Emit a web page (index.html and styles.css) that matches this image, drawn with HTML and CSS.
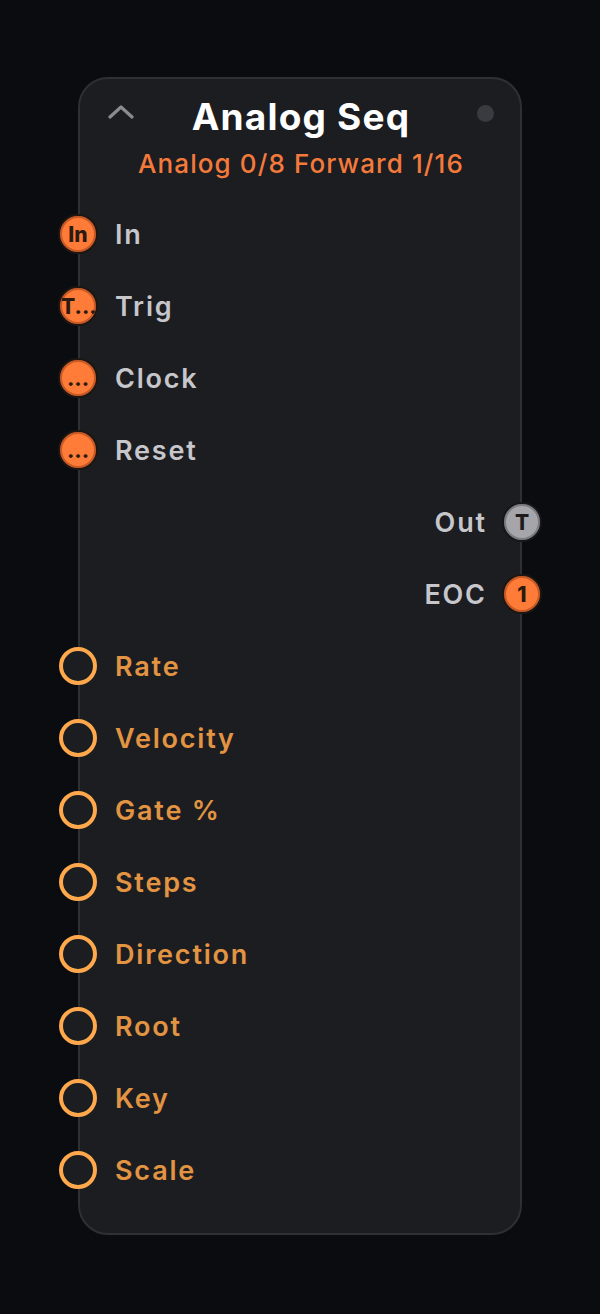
FILE: index.html
```html
<!DOCTYPE html>
<html lang="en">
<head>
  <meta charset="UTF-8" />
  <title>Analog Seq</title>
  <link rel="stylesheet" href="styles.css">
</head>
<body>
  <div class="node">
    <div class="node-header">
      <svg class="collapse" width="26" height="16" viewBox="0 0 26 16">
        <path d="M2 13 L13 3 L24 13" fill="none" stroke="#8a8b90" stroke-width="3.2" stroke-linecap="round" stroke-linejoin="round"/>
      </svg>
      <div class="title">Analog Seq</div>
      <span class="status-dot"></span>
      <div class="subtitle">Analog 0/8 Forward 1/16</div>
    </div>

    <div class="ports">
      <div class="port in"><span class="jack filled">In</span><span class="label">In</span></div>
      <div class="port in"><span class="jack filled overflow">T...</span><span class="label">Trig</span></div>
      <div class="port in"><span class="jack filled">...</span><span class="label">Clock</span></div>
      <div class="port in"><span class="jack filled">...</span><span class="label">Reset</span></div>
      <div class="port out"><span class="label">Out</span><span class="jack grey">T</span></div>
      <div class="port out"><span class="label">EOC</span><span class="jack filled">1</span></div>
      <div class="port in param"><span class="jack ring"></span><span class="label">Rate</span></div>
      <div class="port in param"><span class="jack ring"></span><span class="label">Velocity</span></div>
      <div class="port in param"><span class="jack ring"></span><span class="label">Gate %</span></div>
      <div class="port in param"><span class="jack ring"></span><span class="label">Steps</span></div>
      <div class="port in param"><span class="jack ring"></span><span class="label">Direction</span></div>
      <div class="port in param"><span class="jack ring"></span><span class="label">Root</span></div>
      <div class="port in param"><span class="jack ring"></span><span class="label">Key</span></div>
      <div class="port in param"><span class="jack ring"></span><span class="label">Scale</span></div>
    </div>
  </div>
</body>
</html>
```

FILE: styles.css
```css
* { box-sizing: border-box; }

body {
  margin: 0;
  padding: 77px 0 0;
  background: #0b0c0f;
  font-family: Inter, 'Noto Sans', sans-serif;
  display: flex;
  justify-content: center;
  min-height: 100vh;
}

.node {
  width: 444px;
  height: 1158px;
  background: #1c1d21;
  border: 2px solid #2f3034;
  border-radius: 30px;
  padding-bottom: 27px;
}

.node-header {
  display: grid;
  grid-template-columns: 1fr auto 1fr;
  align-items: center;
  align-content: start;
  height: 119px;
  padding: 16px 26px 0 28px;
}

.collapse {
  justify-self: start;
  margin-top: -10px;
}

.title {
  color: #fff;
  font-size: 37px;
  font-weight: 700;
  line-height: 44px;
  letter-spacing: 1.2px;
}

.status-dot {
  justify-self: end;
  width: 17px;
  height: 17px;
  border-radius: 50%;
  background: #3a3b40;
  margin-top: -8px;
}

.subtitle {
  grid-column: 1 / -1;
  text-align: center;
  color: #f47a3c;
  font-size: 26px;
  font-weight: 500;
  line-height: 32px;
  letter-spacing: 1.1px;
  margin-top: 9px;
}

.port {
  display: flex;
  align-items: center;
  gap: 17px;
  height: 72px;
}

.port.in { margin-left: -22px; }

.port.out {
  justify-content: flex-end;
  margin-right: -22px;
}

.label {
  color: #c6c6cb;
  font-size: 27px;
  font-weight: 600;
  letter-spacing: 1.8px;
}

.port.out .label { margin-right: -1.8px; }

.param .label { color: #e29442; }

.jack {
  width: 40px;
  height: 40px;
  border-radius: 50%;
  display: flex;
  align-items: center;
  justify-content: center;
  font-size: 21px;
  font-weight: 800;
  color: #2b1a10;
  flex-shrink: 0;
  overflow: hidden;
  white-space: nowrap;
}

.jack.filled {
  background: #ff7b38;
  border: 2px solid #1d1612;
  box-shadow: inset 0 0 0 2px #c95a26;
}

.jack.overflow {
  justify-content: flex-start;
  padding-left: 1px;
}

.jack.grey {
  background: #a6a6aa;
  border: 2px solid #16171a;
  box-shadow: inset 0 0 0 2px #7c7c80;
  color: #1c1c1e;
}

.jack.ring {
  width: 38px;
  height: 38px;
  margin: 0 1px;
  background: #1c1d21;
  border: 4px solid #ffa84c;
}
```
